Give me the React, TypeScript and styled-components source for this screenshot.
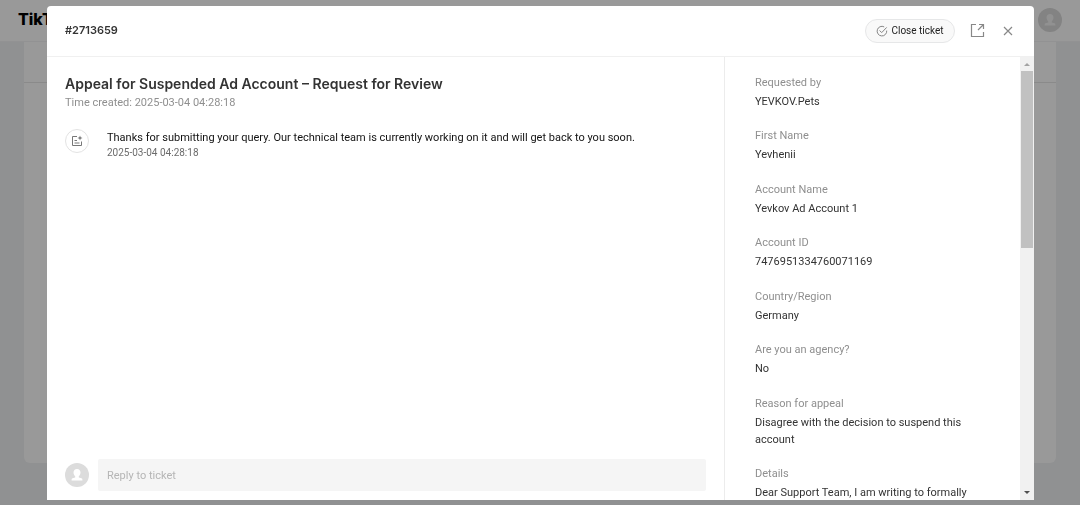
import React from 'react';
import styled, { createGlobalStyle } from 'styled-components';

const GlobalStyle = createGlobalStyle`
  *, *::before, *::after { box-sizing: border-box; }
  body {
    margin: 0;
    background: #f1f2f4;
    color: #121212;
    font-family: Roboto, 'Liberation Sans', sans-serif;
    font-size: 11px;
    line-height: 17px;
  }
  h1, h2, p, dl, dd { margin: 0; }
`;

const Page = styled.div`
  height: 100vh;
  overflow: hidden;
`;

const TopBar = styled.header`
  display: flex;
  align-items: center;
  justify-content: space-between;
  height: 42px;
  padding: 0 18px 2px;
  background: #fff;
  border-bottom: 1px solid #f4f4f5;
`;

const Brand = styled.span`
  font-family: Inter, 'Liberation Sans', sans-serif;
  font-size: 16px;
  font-weight: 800;
  color: #000;
`;

const PageCard = styled.section`
  height: calc(100vh - 84px);
  margin: 0 24px;
  background: #fff;
  border-radius: 0 0 6px 6px;
`;

const CardTabs = styled.div`
  height: 41px;
  border-bottom: 1px solid #e6e6e6;
`;

const Overlay = styled.div`
  position: fixed;
  inset: 0;
  display: flex;
  padding: 6px 46px 5px 47px;
  background: rgba(0, 0, 0, 0.4);
`;

const Dialog = styled.div`
  display: flex;
  flex-direction: column;
  flex: 1;
  min-width: 0;
  background: #fff;
  border-radius: 4px 4px 0 0;
  overflow: hidden;
`;

const DialogHeader = styled.header`
  display: flex;
  align-items: center;
  justify-content: space-between;
  flex: none;
  height: 51px;
  padding: 0 18px 1px;
  border-bottom: 1px solid #f0f0f0;
`;

const TicketId = styled.h1`
  font-family: Inter, 'Liberation Sans', sans-serif;
  font-size: 11px;
  font-weight: 600;
  color: #333;
`;

const Actions = styled.div`
  display: flex;
  align-items: center;
  gap: 15px;
`;

const CloseTicket = styled.button`
  display: flex;
  align-items: center;
  justify-content: center;
  gap: 3px;
  width: 90px;
  height: 24px;
  padding: 0;
  border: 1px solid #e6e7e8;
  border-radius: 12px;
  background: #f9f9f9;
  color: #222;
  font: inherit;
  font-size: 10px;
`;

const IconButton = styled.button`
  display: flex;
  padding: 0;
  border: 0;
  background: none;
  color: #888;
`;

const DialogBody = styled.div`
  display: flex;
  flex: 1;
  min-height: 0;
`;

const Conversation = styled.main`
  display: flex;
  flex-direction: column;
  flex: 1;
  min-width: 0;
  padding: 17px 18px 9px;
`;

const Subject = styled.h2`
  font-family: Inter, 'Liberation Sans', sans-serif;
  font-size: 14px;
  font-weight: 600;
  line-height: 20px;
  color: #333;
`;

const Created = styled.p`
  color: #8f8f8f;
`;

const Message = styled.article`
  display: flex;
  gap: 18px;
  margin-top: 18px;
`;

const MessageBadge = styled.span`
  display: flex;
  align-items: center;
  justify-content: center;
  flex: none;
  width: 24px;
  height: 24px;
  border: 1px solid #e3e3e3;
  border-radius: 50%;
  color: #777;
`;

const MessageTime = styled.time`
  display: block;
  font-size: 10px;
  line-height: 14px;
  color: #6b6b6b;
`;

const ReplyRow = styled.form`
  display: flex;
  align-items: center;
  gap: 9px;
  margin-top: auto;
`;

const ReplyInput = styled.input`
  flex: 1;
  min-width: 0;
  height: 32px;
  padding: 0 9px;
  border: 0;
  border-radius: 2px;
  background: #f5f5f5;
  font: inherit;
  &::placeholder { color: #b5b5b5; opacity: 1; }
`;

const Sidebar = styled.aside`
  display: flex;
  flex: none;
  width: 310px;
  border-left: 1px solid #ececec;
`;

const Fields = styled.dl`
  display: flex;
  flex-direction: column;
  justify-content: space-between;
  flex: 1;
  min-width: 0;
  padding: 17px 30px 0;
  margin-bottom: -1px;
`;

const Label = styled.dt`
  margin-bottom: 2px;
  color: #8f8f8f;
`;

const Value = styled.dd`
  color: #333;
`;

const ScrollTrack = styled.div`
  display: flex;
  flex-direction: column;
  align-items: center;
  flex: none;
  width: 14px;
  background: #f1f1f1;
`;

const ScrollArrow = styled.span`
  display: flex;
  align-items: center;
  justify-content: center;
  height: 14px;
`;

const ScrollThumb = styled.div`
  width: 12px;
  height: 40%;
  margin-bottom: auto;
  background: #c1c1c1;
`;

const fields = [
  ['Requested by', 'YEVKOV.Pets'],
  ['First Name', 'Yevhenii'],
  ['Account Name', 'Yevkov Ad Account 1'],
  ['Account ID', '7476951334760071169'],
  ['Country/Region', 'Germany'],
  ['Are you an agency?', 'No'],
  ['Reason for appeal', 'Disagree with the decision to suspend this account'],
  ['Details', 'Dear Support Team, I am writing to formally'],
];

const Avatar = ({ color = '#dcdcdc', figure = '#fff' }: { color?: string; figure?: string }) => (
  <svg width="24" height="24" viewBox="0 0 24 24" aria-hidden="true">
    <circle cx="12" cy="12" r="12" fill={color} />
    <path
      d="M12 6c-2.200 0-3.500 1.500-3.500 3.600 0 1.500.6 2.800 1.700 3.700v1.300L7.500 15.300c-.6.200-.9.700-.9 1.300v.9h10.800v-.9c0-.6-.3-1.100-.9-1.300l-2.700-.7v-1.300c1.100-.9 1.700-2.200 1.700-3.700C15.500 7.500 14.200 6 12 6z"
      fill={figure}
    />
  </svg>
);

const CheckIcon = () => (
  <svg width="12" height="12" viewBox="0 0 12 12" fill="none" stroke="#858585" aria-hidden="true">
    <path d="M10.700 5.600A4.800 4.800 0 1 1 8.200 1.900" />
    <path d="M3.600 5.500l2.100 2.100 5-5.200" />
  </svg>
);

const OpenIcon = () => (
  <svg width="15" height="15" viewBox="0 0 15 15" fill="none" stroke="currentColor" strokeWidth="1.200" aria-hidden="true">
    <path d="M6 1.500H1.500V13.500H13.500V9" />
    <path d="M9 1.500H13.500V6M13.500 1.500L8 7" />
  </svg>
);

const CloseIcon = () => (
  <svg width="16" height="16" viewBox="0 0 16 16" fill="none" stroke="currentColor" strokeWidth="1.200" aria-hidden="true">
    <path d="M4 4l8 8M12 4l-8 8" />
  </svg>
);

const NoteIcon = () => (
  <svg width="12" height="12" viewBox="0 0 12 12" fill="none" stroke="currentColor" aria-hidden="true">
    <path d="M6 1.500H1.500V10.500H10.500V6.500M3.500 5.500H6M3.500 8H8.500" />
    <path d="M9 0.500L9.700 2.300 11.500 3 9.700 3.700 9 5.500 8.300 3.700 6.500 3 8.300 2.300z" fill="currentColor" stroke="none" />
  </svg>
);

export default function App() {
  return (
    <>
      <GlobalStyle />
      <Page>
        <TopBar>
          <Brand>TikTok</Brand>
          <Avatar color="#dadada" figure="#f2f2f2" />
        </TopBar>
        <PageCard>
          <CardTabs />
        </PageCard>
      </Page>
      <Overlay>
        <Dialog role="dialog" aria-labelledby="ticket-id">
          <DialogHeader>
            <TicketId id="ticket-id">#2713659</TicketId>
            <Actions>
              <CloseTicket type="button">
                <CheckIcon />
                Close ticket
              </CloseTicket>
              <IconButton type="button" aria-label="Open in new window"><OpenIcon /></IconButton>
              <IconButton type="button" aria-label="Close"><CloseIcon /></IconButton>
            </Actions>
          </DialogHeader>
          <DialogBody>
            <Conversation>
              <Subject>Appeal for Suspended Ad Account – Request for Review</Subject>
              <Created>Time created: 2025-03-04 04:28:18</Created>
              <Message>
                <MessageBadge><NoteIcon /></MessageBadge>
                <div>
                  <p>Thanks for submitting your query. Our technical team is currently working on it and will get back to you soon.</p>
                  <MessageTime>2025-03-04 04:28:18</MessageTime>
                </div>
              </Message>
              <ReplyRow>
                <Avatar />
                <ReplyInput aria-label="Reply to ticket" placeholder="Reply to ticket" />
              </ReplyRow>
            </Conversation>
            <Sidebar>
              <Fields>
                {fields.map(([label, value]) => (
                  <div key={label}>
                    <Label>{label}</Label>
                    <Value>{value}</Value>
                  </div>
                ))}
              </Fields>
              <ScrollTrack aria-hidden="true">
                <ScrollArrow>
                  <svg width="6" height="4" viewBox="0 0 6 4"><path d="M0 4L3 1L6 4z" fill="#a3a3a3" /></svg>
                </ScrollArrow>
                <ScrollThumb />
                <ScrollArrow>
                  <svg width="6" height="4" viewBox="0 0 6 4"><path d="M0 0L3 3L6 0z" fill="#505050" /></svg>
                </ScrollArrow>
              </ScrollTrack>
            </Sidebar>
          </DialogBody>
        </Dialog>
      </Overlay>
    </>
  );
}
